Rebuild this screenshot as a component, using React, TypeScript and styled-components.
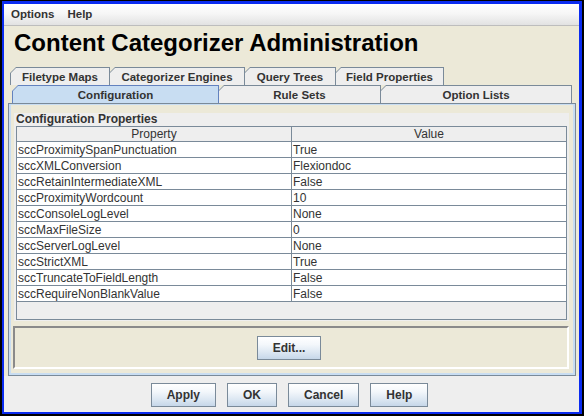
import React from 'react';
import styled, { createGlobalStyle } from 'styled-components';

const Global = createGlobalStyle`
  html, body { margin: 0; padding: 0; background: #ffffff; }
  body { font-family: "Liberation Sans", Arial, sans-serif; }
  * { box-sizing: border-box; }
`;

const Frame = styled.div`
  width: 584px;
  height: 416px;
  border-style: solid;
  border-color: #000000;
  border-width: 1px 2px 2px 2px;
  display: flex;
`;

const Window = styled.div`
  flex: 1;
  min-width: 0;
  display: flex;
  flex-direction: column;
  border-style: solid;
  border-color: #0a2bf0;
  border-width: 3px 3px 2px 2px;
`;

const MenuBar = styled.div`
  height: 22px;
  display: flex;
  align-items: flex-start;
  gap: 13px;
  padding-left: 7px;
  background: linear-gradient(#ffffff 0%, #f6f6f6 45%, #e2e2e2 100%);
  border-bottom: 1px solid #bdbdbd;
`;

const MenuItem = styled.span`
  font-size: 11.5px;
  font-weight: bold;
  line-height: 21px;
  color: #333333;
`;

const Main = styled.div`
  flex: 1;
  display: flex;
  flex-direction: column;
  background: #ece9d8;
  padding: 0 2px 0 4px;
  min-height: 0;
`;

const Title = styled.h1`
  margin: 3px 0 0 6px;
  font-size: 24px;
  line-height: 28px;
  font-weight: bold;
  color: #000000;
`;

const TabRow = styled.div<{ $indent: number; $top?: number }>`
  display: flex;
  height: 18px;
  padding-left: ${(p) => p.$indent}px;
  margin-top: ${(p) => p.$top ?? 0}px;
`;

const TabOuter = styled.div<{ $selected?: boolean; $w: number }>`
  width: ${(p) => p.$w}px;
  flex: none;
  margin-right: -1px;
  padding: 1px 1px 0 1px;
  background: ${(p) => (p.$selected ? '#6382bf' : '#7a8a99')};
  clip-path: polygon(0 6px, 6px 0, 100% 0, 100% 100%, 0 100%);
  position: relative;
  z-index: ${(p) => (p.$selected ? 2 : 1)};
`;

const TabFace = styled.div<{ $selected?: boolean }>`
  height: 100%;
  display: flex;
  align-items: center;
  justify-content: center;
  background: ${(p) => (p.$selected ? '#c8ddf2' : '#eeeeee')};
  clip-path: polygon(0 5px, 5px 0, 100% 0, 100% 100%, 0 100%);
  font-size: 11.5px;
  font-weight: bold;
  color: #333333;
  white-space: nowrap;
  padding-top: 1px;
`;

const Panel = styled.div`
  flex: 1;
  display: flex;
  flex-direction: column;
  border: 1px solid #7a8a99;
  margin-right: 1px;
`;

const PanelInner = styled.div`
  flex: 1;
  display: flex;
  flex-direction: column;
  border: 2px solid #c8ddf2;
  border-top-width: 1px;
  padding: 8px 4px 4px 2px;
`;

const PropsBox = styled.div`
  display: flex;
  flex-direction: column;
  background: #eeeeee;
  margin: 0 0 0 1px;
  padding: 0 2px 1px 2px;
`;

const SectionLabel = styled.div`
  height: 13px;
  line-height: 11px;
  padding-top: 1px;
  font-size: 12px;
  font-weight: bold;
  color: #333333;
`;

const Table = styled.div`
  height: 194px;
  border: 1px solid #7a8a99;
  background: #eeeeee;
  display: flex;
  flex-direction: column;
`;

const Row = styled.div<{ $header?: boolean }>`
  display: grid;
  grid-template-columns: 275px 1fr;
  height: ${(p) => (p.$header ? 15 : 16)}px;
  border-bottom: 1px solid #7a8a99;
  background: ${(p) => (p.$header ? '#eeeeee' : '#ffffff')};
  flex: none;
`;

const Cell = styled.div<{ $header?: boolean; $first?: boolean }>`
  font-size: 12px;
  line-height: ${(p) => (p.$header ? 14 : 15)}px;
  padding-top: ${(p) => (p.$header ? 0 : 1)}px;
  color: #333333;
  padding-left: ${(p) => (p.$header ? 0 : 1)}px;
  text-align: ${(p) => (p.$header ? 'center' : 'left')};
  border-right: ${(p) => (p.$first ? '1px solid #7a8a99' : 'none')};
  white-space: nowrap;
  overflow: hidden;
`;

const EditBox = styled.div`
  margin: 5px 0 0 0;
  height: 43px;
  display: flex;
  align-items: center;
  justify-content: center;
  border-style: solid;
  border-width: 2px;
  border-color: #8a8a8a #ffffff #ffffff #8a8a8a;
  padding-right: 4px;
`;

const Button = styled.button`
  height: 24px;
  padding: 0 15px;
  border: 1px solid #7a8a99;
  background: linear-gradient(#ffffff 0%, #f3f7fb 35%, #dce7f2 70%, #c6d7e9 100%);
  font-family: "Liberation Sans", Arial, sans-serif;
  font-size: 12px;
  font-weight: bold;
  color: #333333;
  border-radius: 0;
  cursor: default;
`;

const Footer = styled.div`
  height: 36px;
  background: #eeeeee;
  display: flex;
  justify-content: center;
  align-items: flex-start;
  gap: 11px;
  padding-top: 7px;
  padding-right: 4px;
`;

const topTabs = [
  { label: 'Filetype Maps', w: 100 },
  { label: 'Categorizer Engines', w: 136 },
  { label: 'Query Trees', w: 92 },
  { label: 'Field Properties', w: 109 },
];

const bottomTabs = [
  { label: 'Configuration', w: 207, selected: true },
  { label: 'Rule Sets', w: 163 },
  { label: 'Option Lists', w: 192 },
];

const rows: [string, string][] = [
  ['sccProximitySpanPunctuation', 'True'],
  ['sccXMLConversion', 'Flexiondoc'],
  ['sccRetainIntermediateXML', 'False'],
  ['sccProximityWordcount', '10'],
  ['sccConsoleLogLevel', 'None'],
  ['sccMaxFileSize', '0'],
  ['sccServerLogLevel', 'None'],
  ['sccStrictXML', 'True'],
  ['sccTruncateToFieldLength', 'False'],
  ['sccRequireNonBlankValue', 'False'],
];

export default function App() {
  return (
    <>
      <Global />
      <Frame>
        <Window>
          <MenuBar>
            <MenuItem>Options</MenuItem>
            <MenuItem>Help</MenuItem>
          </MenuBar>
          <Main>
            <Title>Content Categorizer Administration</Title>
            <TabRow $indent={2} $top={10}>
              {topTabs.map((t) => (
                <TabOuter key={t.label} $w={t.w}>
                  <TabFace>{t.label}</TabFace>
                </TabOuter>
              ))}
            </TabRow>
            <TabRow $indent={4}>
              {bottomTabs.map((t) => (
                <TabOuter key={t.label} $w={t.w} $selected={t.selected}>
                  <TabFace $selected={t.selected}>{t.label}</TabFace>
                </TabOuter>
              ))}
            </TabRow>
            <Panel>
              <PanelInner>
                <PropsBox>
                  <SectionLabel>Configuration Properties</SectionLabel>
                  <Table>
                    <Row $header>
                      <Cell $header $first>Property</Cell>
                      <Cell $header>Value</Cell>
                    </Row>
                    {rows.map(([k, v]) => (
                      <Row key={k}>
                        <Cell $first>{k}</Cell>
                        <Cell>{v}</Cell>
                      </Row>
                    ))}
                  </Table>
                </PropsBox>
                <EditBox>
                  <Button>Edit...</Button>
                </EditBox>
              </PanelInner>
            </Panel>
          </Main>
          <Footer>
            <Button>Apply</Button>
            <Button>OK</Button>
            <Button>Cancel</Button>
            <Button>Help</Button>
          </Footer>
        </Window>
      </Frame>
    </>
  );
}
